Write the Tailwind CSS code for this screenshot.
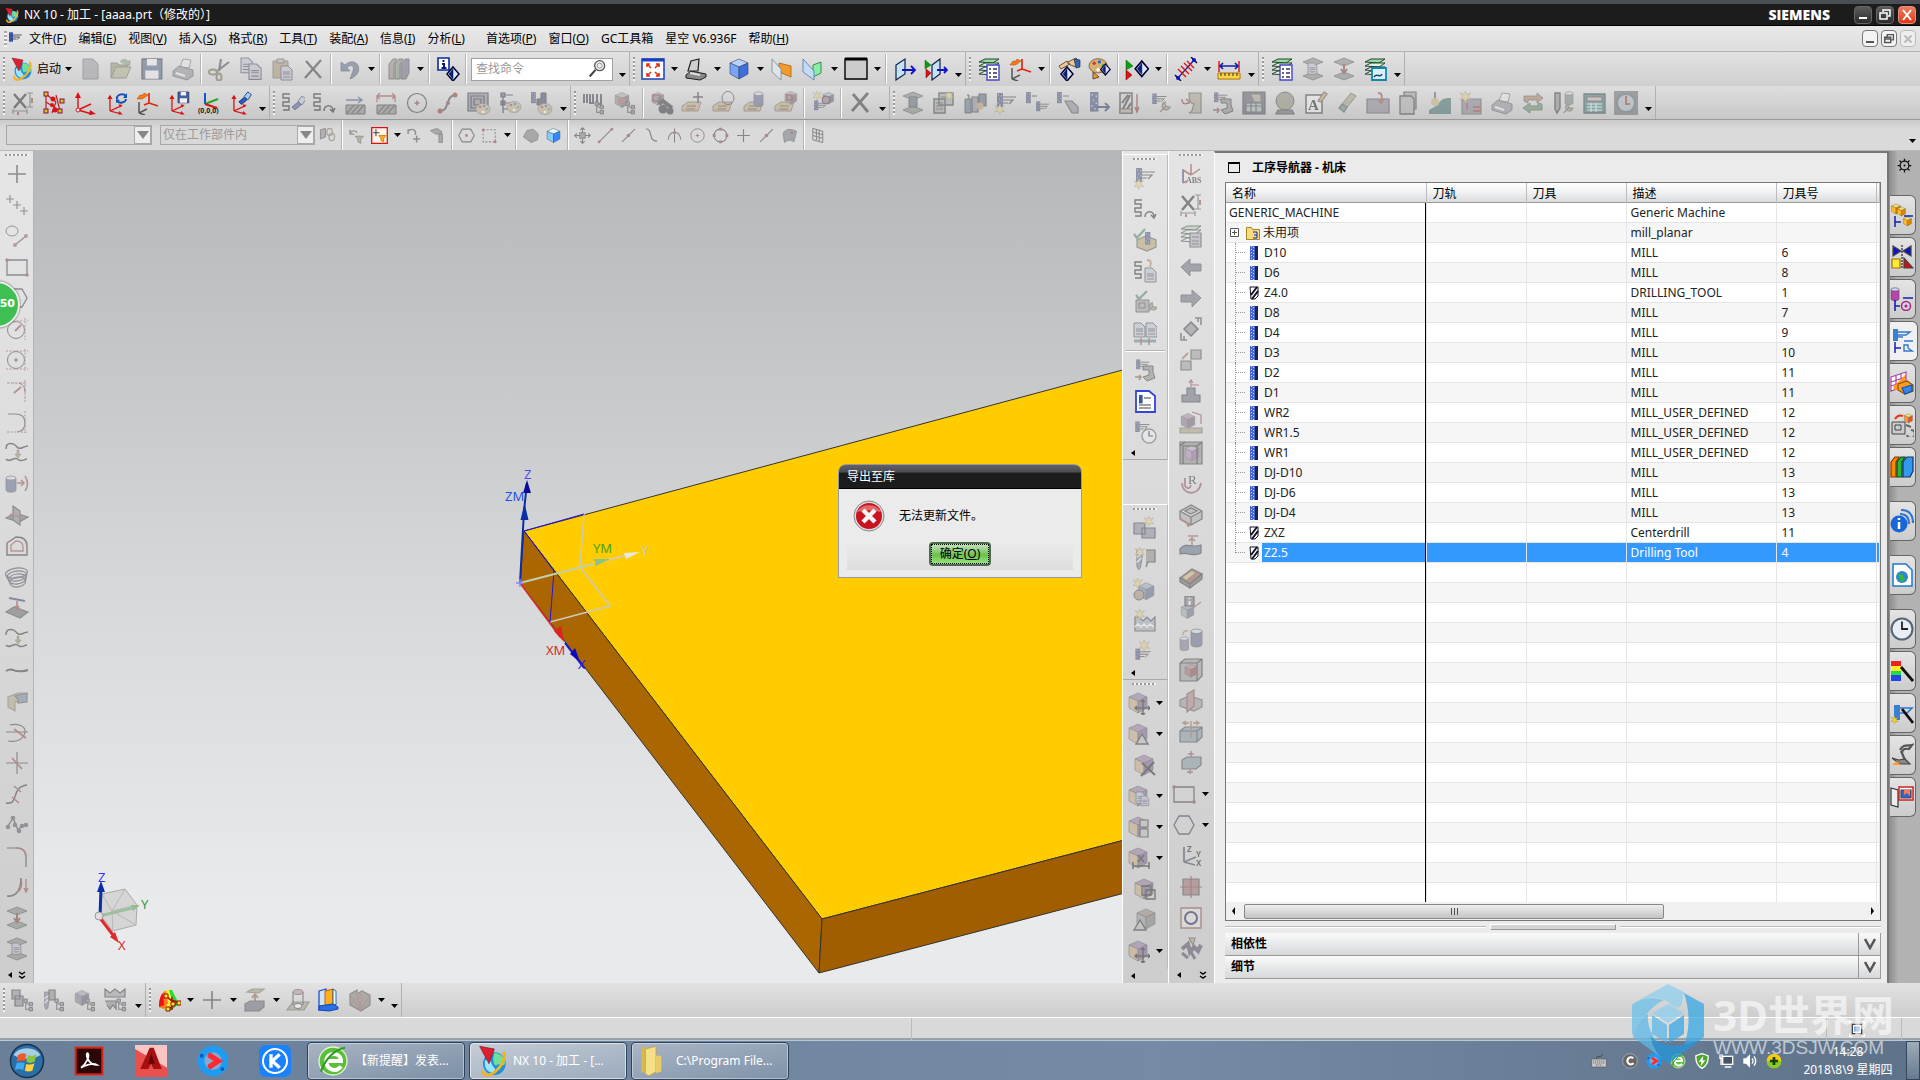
<!DOCTYPE html>
<html lang="zh-CN">
<head>
<meta charset="utf-8">
<meta name="viewport" content="width=device-width, initial-scale=1">
<title>NX 10 - 加工</title>
<script src="https://cdn.jsdelivr.net/npm/@tailwindcss/browser@4"></script>
</head>
<body class="flex h-screen flex-col overflow-hidden bg-[#d8d8d8] font-['Noto_Sans','Noto_Sans_CJK_SC',sans-serif] text-xs text-black">

<!-- Title bar -->
<header class="flex h-[26px] shrink-0 items-center border-t-4 border-b border-t-[#4d4f56] border-b-black bg-[#1c1c1c] px-1 text-white">
  <span data-icon="logo" class="mr-1 size-4"></span>
  <h1>NX 10 - 加工 - [aaaa.prt（修改的）]</h1>
  <span class="mr-6 ml-auto font-['Open_Sans'] text-sm font-extrabold">SIEMENS</span>
  <div class="flex gap-1">
    <button aria-label="最小化" class="flex h-[18px] w-[18px] items-end rounded-sm border border-[#666] bg-linear-to-b from-[#5c5c5c] to-[#2c2c2c] p-1"><span class="h-[2px] w-2 bg-white"></span></button>
    <button aria-label="还原" class="h-[18px] w-[18px] rounded-sm border border-[#666] bg-linear-to-b from-[#5c5c5c] to-[#2c2c2c]"><svg class="size-4" viewBox="0 0 16 16" fill="none" stroke="#fff" stroke-width="1.5"><path d="M6 5V3h7v6h-2M3 6h7v6H3z"/></svg></button>
    <button aria-label="关闭" class="h-[18px] w-[18px] rounded-sm border border-[#e8907c] bg-linear-to-b from-[#ee7a5e] to-[#df3413]"><svg class="size-4" viewBox="0 0 16 16" stroke="#fff" stroke-width="2"><path d="M4 3l8 10M12 3L4 13"/></svg></button>
  </div>
</header>

<!-- Menu bar -->
<nav class="flex h-[26px] shrink-0 items-center border-b border-[#b4b4b4] bg-linear-to-b from-[#e8e8e8] to-[#dedede] pr-1">
  <span class="ml-1 h-4 w-[3px] bg-[repeating-linear-gradient(180deg,#aaa_0_2px,#f4f4f4_2px_4px)]"></span>
  <span data-icon="mill" class="size-4"></span>
  <div id="menu" class="flex"></div>
  <div class="ml-auto flex gap-[3px]">
    <button aria-label="最小化窗口" class="flex h-[17px] w-4 items-end rounded-sm border border-[#777] bg-[#f4f4f4] p-[3px]"><span class="h-[2px] w-2 bg-[#555]"></span></button>
    <button aria-label="还原窗口" class="h-[17px] w-4 rounded-sm border border-[#777] bg-[#f4f4f4]"><svg class="size-[14px]" viewBox="0 0 16 16" fill="none" stroke="#555" stroke-width="1.6"><path d="M6 5V3h7v6h-2M3 6h7v6H3zM3 8h7"/></svg></button>
    <button aria-label="关闭窗口" class="h-[17px] w-4 rounded-sm border border-[#bbb] bg-[#eee]"><svg class="size-[14px]" viewBox="0 0 16 16" stroke="#bbb" stroke-width="2.5"><path d="M4 4l8 8M12 4l-8 8"/></svg></button>
  </div>
</nav>

<!-- Toolbars -->
<div class="flex h-[34px] shrink-0 bg-linear-to-b from-[#e2e2e2] to-[#cfcfcf]">
  <div class="flex items-center border-r border-[#b0b0b0]">
    <div class="flex" data-bar="g"></div>
    <button class="flex w-[67px] items-center pl-[3px]"><span data-icon="logo" class="mr-[3px] size-6"></span>启动<svg class="ml-1 h-1 w-2" viewBox="0 0 8 4"><path d="M0 0h7L3.500 4z"/></svg></button>
    <div class="flex items-center" data-bar="new~ open~ save~ print~ | cut~ copy~ paste~ del~ | undo~ v | books~ v | info |"></div>
    <label class="mx-[2px] flex h-[23px] w-[142px] items-center border border-[#a0a0a0] bg-white px-1">
      <input aria-label="查找命令" placeholder="查找命令" class="w-0 flex-1 outline-none placeholder:text-[#999]">
      <span data-icon="search" class="size-5"></span>
    </label>
    <div class="flex" data-bar="V"></div>
  </div>
  <div class="flex items-center border-r border-[#b0b0b0]" data-bar="g fit v orient v cube v planeo planeg v bg v | door door2 V"></div>
  <div class="flex items-center border-r border-[#b0b0b0]" data-bar="g laylist axorange v | hand palette | diamond v | redlines v ruler V"></div>
  <div class="flex items-center border-r border-[#b0b0b0]" data-bar="g laylist laydoc~ layarrow~ layimg V"></div>
</div>
<div class="flex h-[34px] shrink-0 border-b border-[#999] bg-linear-to-b from-[#dedede] to-[#c8c8c8]">
  <div class="flex items-center border-r border-[#b0b0b0]" data-bar="g dimx~ dots axes axrot axorange axsave ax000 axlight V"></div>
  <div class="flex items-center border-r border-[#b0b0b0]" data-bar="g pathlight~ pathcurve~ hatch~ hatch2~ circdot~ curve~ palsq~ paltree~ palmill~ V"></div>
  <div class="flex items-center border-r border-[#b0b0b0]" data-bar="g tooltree~ blocktree~ | binoc~ tagplus~ tagcirc~ tagcyl~ tagblock~ | starcube~ | bigx~ V"></div>
  <div class="flex items-center border-r border-[#b0b0b0]" data-bar="g layer3~ calcs~ batt~ millstar~ mill2~ millgray~ millarrow~ drillbox~ millwrench~ clampy~ millmach~ gridbox~ ballt~ lettera~ eraser~ boxin~ pages~ teal~ starbox~ print~ cycle~ tools2~ calc~ clock~ V"></div>
</div>
<div class="flex h-[31px] shrink-0 items-center border-b border-[#b8b8b8] bg-linear-to-b from-[#cacaca] to-[#dadada] to-30% pl-[6px]">
  <select aria-label="类型过滤器" disabled class="h-5 w-[146px] appearance-none border border-[#a8a8a8] bg-[#d8d8d8]"><option></option></select>
  <span class="-ml-[18px] flex h-[18px] w-[17px] items-center justify-center border border-[#aaa] bg-[#eee]"><svg class="h-2 w-3" viewBox="0 0 12 8"><path fill="#888" d="M0 0h12L6 8z"/></svg></span>
  <select aria-label="选择范围" disabled class="ml-[9px] h-5 w-[155px] appearance-none border border-[#a8a8a8] bg-[#d8d8d8] pl-[2px] text-[#999] opacity-100"><option>仅在工作部件内</option></select>
  <span class="-ml-[18px] flex h-[18px] w-[17px] items-center justify-center border border-[#aaa] bg-[#eee]"><svg class="h-2 w-3" viewBox="0 0 12 8"><path fill="#888" d="M0 0h12L6 8z"/></svg></span>
  <div class="ml-[2px] flex h-full items-center" data-small="chain~ | filt~ redfilt v rotplus~ hammer~ | hexdot~ dashbox~ v | blob~ cubeb | move4~ lin1~ lin2~ curv1~ arccr~ circdot~ circ4~ plus~ lin2~ surf~ | gridm~"></div>
  <div class="mt-3 mr-[2px] ml-auto flex" data-small="v"></div>
</div>

<!-- Work area -->
<main class="relative flex min-h-0 flex-1">
  <aside class="flex w-[34px] shrink-0 flex-col border-r border-[#b4b4b4] bg-linear-to-b from-[#e6e6e6] to-[#cdcdcd]">
    <div class="flex flex-col items-center" data-col="g plus~ plus3~ circline~ rect~ hexa~ circt~ circt2~ arct~ arct2~ curvdown~ cylar~ planes~ offs~ coil~ planept~ curvdown~ wave~ cshape~ trim~ cross~ scurve~ beads~ corner~ arcar~ layarrow~ laydoc~"></div>
    <div class="mt-auto flex h-4 items-center justify-between px-[7px]" data-end="both"></div>
  </aside>

  <section class="relative min-w-0 flex-1 overflow-hidden bg-linear-to-b from-[#b6b7b8] via-[#d8d9da] via-55% to-[#e9eaec] to-90%">
    <svg class="absolute inset-0 size-full" viewBox="34 151 1088 832" preserveAspectRatio="xMinYMin slice" font-family="Noto Sans" font-size="13">
      <!-- block -->
      <path fill="#fc0" stroke="#333" d="M524 531L1182 354v471L822 919z"/>
      <path fill="#a60" stroke="#333" d="M524 531L822 919l-3 54L520 583z"/>
      <path fill="#a05e00" stroke="#333" d="M822 919l360-94v53L819 973z"/>
      <!-- machine coordinate system -->
      <g fill="none" stroke-width="1.500">
        <path stroke="#ccc9c0" d="M584 514l-4 53 30 39-60 16"/>
        <path stroke="#2a10e0" stroke-width="1" d="M584 514l-60 17 30 40-4 51"/>
        <path stroke="#c3cfae" stroke-width="2" d="M520 583l73-19"/>
        <path stroke="#ccc" d="M605 561l24-7"/>
        <path stroke="#0a2ea8" stroke-width="2" d="M520 583l4-72 3-28"/>
        <path stroke="#e02a2a" d="M520 583l40 54"/>
        <path stroke="#1a10e0" stroke-width="2" d="M565 643l19 25"/>
        <path stroke="#88f" d="M516 583h8m-4-4v8"/>
      </g>
      <path fill="#0a2ea8" d="M524.500 503l4 17h-8z"/><path fill="#0a0aa0" d="M527 480l4 13h-8z"/>
      <path fill="#8ec08a" d="M610 559l-16 0 2 7z"/><path fill="#e8e8e0" d="M640 552l-16 1 2 6z"/>
      <path fill="#d22" d="M564 642l-10-11 7-5z"/><path fill="#0a0ac0" d="M580 662l-10-8 5-6z"/>
      <text x="524" y="479" fill="#4a4af0">Z</text><text x="505" y="501" fill="#1d50e8">ZM</text>
      <text x="593" y="553" fill="#4ea020">YM</text><text x="641" y="555" fill="#c8c8c8">Y</text>
      <text x="546" y="655" fill="#d22c2c">XM</text><text x="578" y="669" fill="#2418e0">X</text>
      <!-- view triad -->
      <path fill="#ccc" fill-opacity=".7" stroke="#aaa" d="M102 894l23-5 12 16-1 20-23 6-12-15z"/>
      <path fill="none" stroke="#b8b8b8" d="M102 894l10 17 25-6M112 911l1 20M125 889l-13 22 24 14"/>
      <path stroke="#9fc09f" stroke-width="3" d="M100 916l32-8"/><path fill="#8fbf8f" d="M140 905l-9 0 2 6z"/>
      <path stroke="#0a2ea8" stroke-width="3" d="M100 916l1-28"/><path fill="#0a2ea8" d="M101 881l4 11h-8z"/>
      <path stroke="#e02a2a" stroke-width="3" d="M100 918l13 17"/><path fill="#e02a2a" d="M119 943l-9-6 5-5z"/>
      <circle cx="99" cy="916" r="4" fill="#e0e0e0" stroke="#999"/>
      <text x="98" y="882" fill="#33f">Z</text><text x="141" y="909" fill="#2f9a3f">Y</text><text x="118" y="950" fill="#d22c2c">X</text>
    </svg>

    <div role="dialog" aria-label="导出至库" class="absolute top-[313px] left-[804px] w-[244px] rounded-t-lg border border-[#999] bg-[#ebebeb]">
      <h2 class="rounded-t-md border-b border-black bg-linear-to-b from-[#606066] from-0% via-[#4d4e53] via-30% to-[#1c1c1c] to-36% px-2 pt-px leading-[22px] text-white">导出至库</h2>
      <div class="flex h-[53px] items-center gap-[14px] px-[14px]">
        <svg class="size-8" viewBox="0 0 32 32"><circle cx="16" cy="16" r="15" fill="#ddd" stroke="#888"/><circle cx="16" cy="16" r="13" fill="#c81420"/><path d="M4 12a13 11 0 0124 0 30 20 0 00-24 0" fill="#e46a6a"/><path d="M10 10l12 12M22 10L10 22" stroke="#f4f4f4" stroke-width="4.500"/></svg>
        <p class="pt-px">无法更新文件。</p>
      </div>
      <div class="mx-2 mb-[7px] flex h-7 items-start justify-center bg-linear-to-b from-[#ebebeb] to-[#dedede]">
        <button class="h-6 w-[62px] rounded-sm border-2 border-[#4c6b4c] bg-linear-to-b from-[#c4e6bc] via-[#6cc04c] via-55% to-[#9ae87c]"><span class="block border border-dotted border-black leading-[18px]">确定(<u>O</u>)</span></button>
      </div>
    </div>
  </section>

  <div class="absolute top-[130px] -left-[27px] flex size-[47px] items-center justify-end rounded-full border-2 border-[#eee] bg-[#3fbf52] pr-[3px] font-['DejaVu_Sans'] text-[11px] font-bold text-white shadow-[0_0_2px_#444]">50</div>

  <aside class="flex w-[46px] shrink-0 flex-col border-l border-white bg-linear-to-b from-[#e4e4e4] to-[#cdcdcd] pt-[3px]">
    <div class="flex flex-col items-center border-t border-r border-b border-t-white border-r-[#bbb] border-b-[#aaa]" data-col="g millstar~ pathcurve~ checkblk~ pathdoc~ checkmach~ docs~ | millmach~ bluedoc millclock~ V"></div>
    <div class="mt-11 flex flex-col items-center border-t border-r border-b border-t-white border-r-[#bbb] border-b-[#aaa]" data-col="g starbox2~ stardrill~ starcube2~ starwave~ starmill~ V"></div>
    <div class="flex flex-1 flex-col items-center border-r border-[#bbb] pr-[2px]" data-col="g cmove~v ctri~v cx~ ccopy~v cgrid~v cdim~v cframe~ ctri2~ cmove~v"></div>
    <div class="flex h-[14px] shrink-0 items-center px-[7px]" data-end="one"></div>
  </aside>
  <aside class="flex w-[46px] shrink-0 flex-col border-l border-white bg-linear-to-b from-[#e4e4e4] to-[#cdcdcd]">
    <div class="flex flex-col items-center pr-[2px]" data-col="g abs~ dimx~ laycalc~ left~ right~ rotd~ boxes~ stand~ cubemeas~ cubewire~ hookr~ wirebox~ planeup~ slab~ infocube~ cyls~ redcube~ cutp~ stretch~ blockpl~ rect~v hexa~v axzyx~ redsq~ osq~ textp~"></div>
    <div class="mt-auto flex h-4 items-center justify-between px-[7px]" data-end="both"></div>
  </aside>

  <!-- Operation navigator -->
  <section class="flex w-[675px] shrink-0 flex-col border-t-2 border-r-2 border-l border-t-[#777] border-r-[#777] border-l-white bg-[#ebebeb] pr-[6px] pl-[10px]">
    <h2 class="flex h-[29px] shrink-0 items-center gap-3 pl-[3px] font-bold"><span class="h-[11px] w-3 border border-t-2 border-black"></span>工序导航器 - 机床</h2>
    <div class="relative flex min-h-0 flex-1 flex-col overflow-hidden border border-[#777] bg-white">
      <table class="w-full table-fixed border-collapse text-left">
        <colgroup><col class="w-[200px]"><col class="w-[100px]"><col class="w-[100px]"><col class="w-[150px]"><col class="w-[100px]"><col></colgroup>
        <thead class="border-b border-[#999] bg-linear-to-b from-white via-[#f0f1f2] to-[#d9dbdd]">
          <tr class="h-[19px] [&>th]:border-r [&>th]:border-[#bbb] [&>th]:px-[6px] [&>th]:pt-[2px] [&>th]:pb-0 [&>th]:font-normal [&>th]:leading-[17px]"><th>名称</th><th>刀轨</th><th>刀具</th><th>描述</th><th>刀具号</th><th aria-label="更多"></th></tr>
        </thead>
        <tbody id="rows"></tbody>
      </table>
      <div class="absolute top-5 bottom-[18px] left-[199px] w-px bg-black"></div>
      <div class="absolute inset-x-0 bottom-0 flex h-[18px] items-center bg-[#f0f0f0] px-1">
        <svg class="size-2" viewBox="0 0 8 8"><path d="M5 0v8L2 4z"/></svg>
        <div class="mx-[6px] flex-1"><div class="flex h-[15px] w-[68%] items-center justify-center gap-[2px] rounded-xs border border-[#888] bg-linear-to-b from-[#eee] to-[#c4c4c4]"><i class="h-[7px] w-px bg-[#555]"></i><i class="h-[7px] w-px bg-[#555]"></i><i class="h-[7px] w-px bg-[#555]"></i></div></div>
        <svg class="size-2" viewBox="0 0 8 8"><path d="M3 0v8l3-4z"/></svg>
      </div>
    </div>
    <div class="flex h-3 shrink-0 items-center gap-1"><i class="h-[2px] flex-1 border-b border-white bg-[#bbb]"></i><i class="h-[6px] w-[126px] border border-t-white border-r-[#999] border-b-[#999] border-l-white bg-[#d4d4d4]"></i><i class="h-[2px] flex-1 border-b border-white bg-[#bbb]"></i></div>
    <button class="flex h-[23px] shrink-0 items-center justify-between border-b border-[#999] bg-linear-to-b from-[#fafafa] to-[#d6d8da] pl-[6px] font-bold">相依性<span class="flex h-full w-[23px] items-center justify-center border-r border-l border-[#999] bg-linear-to-b from-[#fafafa] to-[#d6d8da]"><svg class="size-3" viewBox="0 0 12 12" fill="none" stroke="#555" stroke-width="2.500"><path d="M1 1l5 9 5-9"/></svg></span></button>
    <button class="mb-1 flex h-[23px] shrink-0 items-center justify-between border-b border-[#999] bg-linear-to-b from-[#fafafa] to-[#d6d8da] pl-[6px] font-bold">细节<span class="flex h-full w-[23px] items-center justify-center border-r border-l border-[#999] bg-linear-to-b from-[#fafafa] to-[#d6d8da]"><svg class="size-3" viewBox="0 0 12 12" fill="none" stroke="#555" stroke-width="2.500"><path d="M1 1l5 9 5-9"/></svg></span></button>
  </section>

  <!-- Resource bar -->
  <aside id="tabs" class="flex w-[31px] shrink-0 flex-col items-start gap-[2px] bg-linear-to-r from-[#8c8c8c] to-[#b2b2b2] to-30% pl-px"></aside>
</main>

<div class="flex h-[35px] shrink-0 border-b border-white bg-linear-to-b from-[#e2e2e2] to-[#cdcdcd]">
  <div class="flex items-center border-r border-[#b0b0b0]" data-bar="g tree1~ tree2~ tree3~ tree4~ V"></div>
  <div class="flex items-center border-r border-[#b0b0b0]" data-bar="g rainbow v plus~ v extr~ v punch~ bluepad gem~ v V"></div>
</div>
<div class="flex h-[22px] shrink-0 items-center bg-[#d9d9d9] shadow-[inset_0_-2px_0_#9aa0a8]">
  <div class="h-full w-[912px] border-r border-[#bbb]"></div>
  <div class="mr-[18px] ml-auto flex h-full w-[76px] items-center border-r border-l border-[#bbb] pl-[22px]"><span data-icon="winicon" class="size-4"></span></div>
</div>

<!-- Taskbar -->
<footer class="flex h-10 shrink-0 items-center border-t border-[#b8c8d8] bg-linear-to-r from-[#6a7f98] via-[#758aa4] via-60% to-[#5e7389] text-white">
  <button aria-label="开始" class="flex w-[54px] justify-center"><span data-icon="start" class="size-9"></span></button>
  <button aria-label="PDF" class="flex w-[70px] justify-center"><span data-icon="pdf" class="size-8"></span></button>
  <button aria-label="CAD" class="flex w-[54px] justify-center"><span data-icon="cad" class="size-8"></span></button>
  <button aria-label="视频" class="flex w-[70px] justify-center"><span data-icon="play" class="size-8"></span></button>
  <button aria-label="K" class="flex w-[54px] justify-center"><span data-icon="kapp" class="size-8"></span></button>
  <div class="ml-[5px] flex gap-1">
    <button class="flex h-[38px] w-[158px] items-center gap-[6px] rounded-sm border border-[#31435a] bg-linear-to-br from-white/40 to-white/10 pl-[9px] shadow-[inset_0_0_0_1px_#ffffff66]"><span data-icon="ebrowser" class="size-8"></span>【新提醒】发表...</button>
    <button class="flex h-[38px] w-[158px] items-center gap-1 rounded-sm border border-[#31435a] bg-linear-to-br from-white/60 to-white/30 pl-[7px] shadow-[inset_0_0_0_1px_#ffffff99]"><span data-icon="logo" class="size-8"></span>NX 10 - 加工 - [...</button>
    <button class="flex h-[38px] w-[158px] items-center gap-2 rounded-sm border border-[#31435a] bg-linear-to-br from-white/40 to-white/10 pl-1 shadow-[inset_0_0_0_1px_#ffffff66]"><span data-icon="folder" class="size-8"></span>C:\Program File...</button>
  </div>
  <div class="ml-auto flex items-center gap-2">
    <span data-icon="kbd" class="mr-[7px] size-4"></span><span data-icon="tc" class="size-4"></span><span data-icon="play" class="size-4"></span><span data-icon="ebrowser" class="size-4"></span><span data-icon="shield" class="size-4"></span><span data-icon="net" class="size-4"></span><span data-icon="vol" class="size-4"></span><span data-icon="plusc" class="size-4"></span>
  </div>
  <time class="mr-[10px] ml-[18px] w-24 text-center leading-[18px]">14:28<br>2018\8\9 星期四</time>
  <button aria-label="显示桌面" class="h-full w-[14px] border border-[#33465c] bg-linear-to-b from-white/40 to-white/5"></button>
</footer>

<!-- Site mark -->
<div class="pointer-events-none absolute right-[26px] bottom-4 flex items-start gap-[9px] text-white/60">
  <svg class="h-20 w-[72px]" viewBox="0 0 72 80" opacity=".75">
    <path fill="#8fd0ee" d="M36 0L0 20l2 0Q20 8 36 18Q46 28 50 20L52 8z"/><path fill="#6ac0ea" d="M0 21Q14 10 32 16Q14 24 2 52L0 50z"/><path fill="#38a8e4" d="M52 9l20 11v33Q62 60 50 66Q62 40 52 9z"/><path fill="#5cb8e8" d="M1 53Q8 34 16 30Q14 50 34 66L38 80z"/><path fill="#2496dc" d="M18 52Q36 70 70 55L36 80Q22 70 18 52z"/>
    <path fill="#8fd0ee" d="M36 20l16 9-16 10-16-10z"/><path fill="#5cb8e8" d="M20 31l15 10v18l-15-9z"/><path fill="#38a8e4" d="M52 31L37 41v18l15-9z"/>
  </svg>
  <div class="pt-[6px]"><p class="text-[42px] leading-[50px] font-bold whitespace-nowrap">3D世界网</p><p class="font-['Liberation_Sans'] text-[19px] leading-4">WWW.3DSJW.COM</p></div>
</div>

<script>
// ---- icon parts ----
const at = (x, y, s, k = 1) => `<g transform="translate(${x} ${y}) scale(${k})">${s}</g>`;
const P = (d, f = 'none', s = '#444', w = 1.2) => `<path d="${d}" fill="${f}" stroke="${s}" stroke-width="${w}"/>`;
const cube = (a = '#b8d4ff', b = '#7aa4f8', c = '#3f6ee0') => `<path fill="${a}" stroke="#345" stroke-width=".6" d="M3 6l9-4 9 4-9 4z"/><path fill="${b}" stroke="#345" stroke-width=".6" d="M3 6l9 4v12l-9-5z"/><path fill="${c}" stroke="#345" stroke-width=".6" d="M21 6l-9 4v12l9-5z"/>`;
const gray = () => cube('#aaa', '#888', '#666');
const mixed = () => cube('#b070c0', '#e0a850', '#8858b0');
const tree = P('M2 2v11M2 6h5M2 12h5') + P('M0 0h4v4H0zM6 4h4v4H6zM6 10h4v4H6z', '#889', '#334', 1);
const shaft = `<rect x="0" y="0" width="6" height="14" fill="#34489c"/><path d="M1 2h1M4 3h1M2 6h1M4 8h1M1 10h1M3 12h1" stroke="#aac0ff"/>`;
const mill = at(3, 2, shaft) + P('M9 6h13M9 9h10l-4 4M9 12h5', 'none', '#333', 1.2);
const star = `<path fill="#f0d030" stroke="#865" stroke-width=".5" d="M6 0l1.500 4L12 2 9 6l3 4-4-1-2 4-2-4-4 1 3-4-3-4 4 2z"/>`;
const tag = `<path fill="#d8a850" stroke="#643" stroke-width=".7" d="M1 15l6-4h13l-3 9H1z"/><path d="M6 15h9M5 18h9" stroke="#643"/>`;
const pal = `<ellipse cx="7" cy="6" rx="7" ry="5.500" fill="#d8b070" stroke="#765" stroke-width=".7"/><circle cx="4" cy="4" r="1.300" fill="#d33"/><circle cx="8" cy="3" r="1.300" fill="#36c"/><circle cx="11" cy="6" r="1.300" fill="#3a3"/><circle cx="7" cy="9" r="1.300" fill="#fff"/>`;
const doc = P('M0 0h7l4 4v10H0z', '#b8c0e0', '#446', 1) + P('M2 6h7M2 8h7M2 11h7', 'none', '#446', 1);
const spath = P('M9 3H2v4h6v4H2v4h6v4H2', 'none', '#222', 1.4);
const lay = (c = '#e8efe9') => P('M2 5l6-3h14l-6 4z', c, '#243', 1);
const stack = lay('#9d9') + at(0, 4, lay()) + at(0, 8, lay()) + at(0, 12, lay());
const ax = (c = '#d11') => P('M7 20V4M7 20l13-6M7 20l12 3', 'none', c, 1.5) + `<path fill="${c}" d="M7 1l3 5H4zM22 13l-5-1 2 4zM22 24l-4-4-1 4z"/>`;
const diam = P('M8 1l6 7-6 7-6-7z', '#dce8ff', '#003', 1.5) + P('M8 3v10L4 8z', '#0a2080', '#003', .5);
const wrench = P('M3 12l6-6M8 2a4 4 0 105 5l-3 0-2-2z', '#caa860', '#765', 1.6);
const torch = P('M2 12l6-5 3 3-6 5z', '#2a5ad0', '#124', .8) + P('M8 6l4-5 4 3-4 6z', '#9cf', '#124', .8);
const floppy = P('M0 0h12v12H0z', '#4060a0', '#234', .8) + P('M3 0h6v4H3zM2 7h8v5H2z', '#eef', 'none');
const sheet = (l, h) => P(`M12 ${l}l10 4-10 4-10-4z`, '#7a8a80', '#444', .8);
const cyl = c => `<path fill="${c}" stroke="#446" stroke-width=".7" d="M0 3v12c0 3 10 3 10 0V3z"/><ellipse cx="5" cy="3" rx="5" ry="2" fill="#cde" stroke="#446" stroke-width=".7"/>`;
const clk = `<circle cx="8" cy="8" r="7" fill="#e8eef4" stroke="#567" stroke-width="1.400"/><path d="M8 3v5h4" fill="none" stroke="#222" stroke-width="1.200"/>`;
const prn = P('M9 10l3-8 8 1-2 8z', '#e4e8ec', '#555', .8) + P('M2 14l6-5 14 4v6l-6 4-14-4z', '#8a90a0', '#445', .8) + P('M5 16l9 3', 'none', '#eee', 2);
const machine = P('M2 8h13v12H2zM5 11h6v5H5z', '#999', '#444', 1) + at(11, 9, wrench, .9);
const drill = P('M2 0h6v8l-2 12-2 2-2-4z', '#6a80b0', '#334', .8) + P('M2 8l6-4M2 14l5-5', 'none', '#eef', 1.5);

const I = {
  logo: `<circle cx="13" cy="14" r="8.500" fill="#1d8fe0"/><path fill="#6fe09a" d="M13 6c5 0 8 4 8 8-2 3-4-1-6 1s-4-4-2-9z"/><path fill="#9fe4ff" d="M6 12c2-3 4-1 5 2s4 3 2 7c-5 0-8-4-7-9z"/><ellipse cx="12.500" cy="14" rx="11" ry="5.500" fill="none" stroke="#f2b322" stroke-width="2.200" stroke-dasharray="34 60" stroke-dashoffset="4" transform="rotate(-50 12 14)"/><path fill="#dd2030" stroke="#801020" stroke-width=".5" d="M2 1l11 2-4 11z"/>`,
  new: P('M5 2h10l5 5v15H5z', '#99a', '#667', 1), open: P('M2 21V6h6l2 2h9v3', '#9a9448', '#665', 1) + P('M2 21l5-11h15l-5 11z', '#b8b068', '#665', 1) + P('M11 5c3-4 7-3 8 0l2-2v5h-5', '#6a6', '#575', .7),
  save: at(2, 2, floppy, 1.65), print: prn,
  cut: P('M13 2l-2 12M21 5L8 15', 'none', '#445', 2.2) + `<ellipse cx="5" cy="15" rx="4" ry="2.500" fill="none" stroke="#763" stroke-width="2"/><ellipse cx="11" cy="20" rx="2.500" ry="3.500" fill="none" stroke="#763" stroke-width="2"/>`,
  copy: at(2, 1, doc, 1.05) + at(10, 7, doc, 1.1), paste: P('M3 4h15v17H3z', '#b09050', '#664', 1) + P('M7 2h7v4H7z', '#aaa', '#555', 1) + at(11, 9, doc, 1),
  del: P('M5 4l15 17M20 3L4 21', 'none', '#333', 2.2), bigx: P('M5 3l15 18M20 2L4 20', 'none', '#333', 2.8),
  undo: P('M3 5v9h9l-3-3c3-4 8-3 6 3l-3 8c8-3 11-10 7-15-4-4-9-2-12 1z', '#4a66a8', '#346', .8),
  books: P('M2 7l4-5h4L7 7v15H2z', '#987', '#444', 1) + P('M8 7l4-5h4l-3 5v15H8z', '#696', '#444', 1) + P('M14 7l4-5h4v14l-3 6h-5z', '#669', '#444', 1),
  info: P('M2 1h11v12H2z', '#fff', '#0a2aa0', 1.6) + P('M7.500 3v2M6 7h2v4M5.500 11h5', 'none', '#0a1a80', 2) + at(9, 9, diam),
  search: `<circle cx="14" cy="8" r="6" fill="#eee" stroke="#555" stroke-width="1.500"/><circle cx="14" cy="8" r="3" fill="none" stroke="#888"/>` + P('M9 13l-7 8', 'none', '#444', 2.5),
  fit: P('M1 2h22v20H1z', '#fff', '#1a40c0', 1.5) + P('M1 3h22', 'none', '#1a40c0', 3) + P('M10 11L6 7m0 3V7h3M14 11l4-4m-3 0h3v3M10 15l-4 4m0-3v3h3M14 15l4 4m0-3v3h-3', 'none', '#e03010', 1.6),
  orient: P('M2 18l5-4 15 3v3l-6 3-14-2z', '#888', '#222', 1) + P('M4 14L7 4l8-2-1 12z', '#d0d0d0', '#222', 1.2) + P('M6 16l10 2', 'none', '#ddd', 2),
  cube: cube(), cubeb: cube('#dff', '#8cf', '#38f'),
  planeo: P('M9 6l12 3v11L9 15z', '#f09a30', '#a60', .8) + P('M2 2l9 10v11L2 15z', '#dde4ea', '#789', .8), planeg: P('M12 8l8-3v11l-8 4z', '#8ea', '#484', 1) + P('M2 2l11 12v9L2 15z', '#c0dcf6', '#57a', .8),
  bg: P('M1 2h22v20H1z', '#ccc', '#000', 1.4) + P('M1 2h22', 'none', '#000', 3),
  door: P('M3 8l9-6v15l-9 6z', '#c4e2fa', '#124', 1.2) + P('M9 13h13m-4-4l4 4-4 4', 'none', '#11c', 1.8), door2: P('M8 8l8-6v15l-8 6z', '#c4e2fa', '#124', 1.2) + P('M13 13h10m-3-3l3 3-3 3', 'none', '#11c', 1.8) + P('M1 3l6 5-6 4z', '#191', '#070', .5) + P('M2 12l5 4-5 5z', '#d11', '#700', .5),
  laylist: stack + P('M10 8h12v15H10z', '#fff', '#44c', 1.4) + P('M12 12h2m2 0h4M12 16h2m2 0h4M12 20h2m2 0h4', 'none', '#335', 1.4),
  laydoc: sheet(1) + sheet(15) + at(7, 6, doc, .8), layarrow: sheet(1) + sheet(15) + P('M12 7v8m-3-3l3 4 3-4', 'none', '#a43010', 2), layer3: sheet(1) + sheet(15) + P('M8 6h8v10H8z', '#568', '#244', 1), layimg: stack + P('M9 11h14v12H9z', '#d8f0ff', '#18a', 1.8) + P('M11 20c3-5 6 2 8-3', 'none', '#246', 1.5),
  axes: P('M5 19V4M5 19l14 4M5 19l13-6', 'none', '#d11', 1.4) + `<circle cx="5" cy="19" r="2" fill="#fff" stroke="#d11"/><path fill="#d11" d="M5 1l3 6H2zM23 23l-6-4-1 5z"/>`,
  axrot: at(0, 3, ax(), .85) + P('M13 8a5 4 0 019-3m0 3a5 4 0 01-9 2', 'none', '#1450b0', 2) + P('M23 2v5h-4zM12 12V8l4 1z', '#1450b0', 'none'), axorange: P('M14 2v10M14 12l9 3M14 12l-5 2', 'none', '#e02a10', 1.7) + P('M2 8l3-4h3l1-2 4 2-4 3-2 1z', '#f27a18', '#b40', .5) + P('M4 22V11M4 22l8-4M4 22l6 2', 'none', '#555', 1.5),
  axsave: at(0, 3, ax(), .85) + at(12, 1, floppy, .9), ax000: P('M8 13V2', 'none', '#15c', 2) + P('M8 13l13-5', 'none', '#2a2', 2) + P('M8 13l12 4', 'none', '#d11', 2) + '<text x="1" y="22" font-size="7" font-weight="bold">(0,0,0)</text>', axlight: at(0, 3, ax(), .85) + at(9, 0, torch, .9),
  hand: P('M2 9l8-5 3 3-9 5zM11 5l8-4 4 4-4 5-8-3z', '#f0c890', '#654', 1) + P('M17 2l6 1v7l-4 1z', '#36a', '#124', .6) + at(2, 9, diam), palette: at(1, 1, pal, 1.3) + at(11, 6, diam, .8) + P('M5 15v7l6-2z', '#d8a030', '#743', 1), diamond: P('M1 3l7 6-7 4z', '#191', '#060', .5) + P('M1 13l6 5-6 5z', '#d11', '#700', .5) + at(8, 3, diam, 1.1),
  redlines: P('M3 22L21 2', 'none', '#02a', 1.2) + P('M4 12l8 8M7 9l8 8M10 6l8 8M13 4l7 7', 'none', '#d11', 1.3) + P('M1 18l6 6M17 0l6 6', 'none', '#111', 1.5) + '<circle cx="4" cy="21" r="2" fill="#11c"/><circle cx="20" cy="3" r="2" fill="#11c"/>', ruler: P('M2 4v11M22 4v11', 'none', '#d11', 1.4) + P('M3 9h18M6 6L3 9l3 3M18 6l3 3-3 3', 'none', '#12a', 1.7) + P('M1 16h22v6H1z', '#ffd640', '#a70', 1) + P('M4 16v3M8 16v3M12 16v3M16 16v3M20 16v3'),
  dimx: P('M3 3l12 14M15 3L3 17', 'none', '#222', 2.4) + P('M19 2v14M16 2h6M16 16h6M2 20h14M2 18v5M16 18v5', 'none', '#555') + P('M21 7v5M7 21v3', 'none', '#c33', 2), dots: P('M4 3v17M4 3l10 8M4 11l14 9M14 4l4 16M14 11l-4 11', 'none', '#b22', 1.2) + [[4, 3], [4, 20], [20, 10], [18, 20]].map(a => `<rect x="${a[0] - 2}" y="${a[1] - 2}" width="4" height="4" fill="#d8c020" stroke="#814"/>`).join('') + '<circle cx="11" cy="8" r="2.500" fill="#d11"/><circle cx="10" cy="14" r="2" fill="#d11"/><circle cx="13" cy="19" r="2.500" fill="#d11"/>',
  pathlight: spath + at(9, 4, torch), pathcurve: spath + P('M12 20c0-7 9-7 9 0m-3-2l3 3 2-4', 'none', '#222', 1.5), hatch: P('M3 14h19v9H3z', '#888', '#333', 1) + P('M4 22l7-8M9 22l7-8M14 22l7-8') + P('M3 9h16m-4-3l4 3-4 3', 'none', '#25a', 1.5), hatch2: P('M3 14h19v9H3z', '#888', '#333', 1) + P('M4 22l7-8M9 22l7-8M14 22l7-8') + P('M3 11V5h18v6M6 2L3 5l3 3M18 2l3 3-3 3', 'none', '#c33', 1.3),
  circdot: '<circle cx="12" cy="12" r="9.500" fill="none" stroke="#333" stroke-width="1.200"/><path d="M9.500 12h5M12 9.500v5" stroke="#c22" stroke-width="1.500"/>', curve: P('M4 20c10 0 5-15 15-16', 'none', '#444', 2) + '<circle cx="4" cy="20" r="2.500" fill="#c22"/><circle cx="12" cy="12" r="2" fill="#c22"/><circle cx="19" cy="4" r="2.500" fill="#c22"/>',
  palsq: P('M1 2h20v18H1z', '#889', '#225', 1.2) + P('M4 5h13v12H4zM7 8h7v6H7z', 'none', '#225') + at(9, 12, pal), paltree: P('M3 2h4v4H3zM3 10h4v4H3zM5 6v16M8 4h7M8 12h5M5 18h5', '#668', '#225') + at(9, 10, pal), palmill: at(2, 1, shaft, .8) + P('M8 8h4V2h5v12H8z', '#447', '#225', 1) + at(9, 12, pal),
  tooltree: P('M2 3v9M5 3v9M8 3v9h3V3M15 3v10h4V3', 'none', '#435', 2) + at(13, 11, tree, .85), blocktree: at(0, 0, gray(), .75) + '<circle cx="9" cy="10" r="4" fill="#c55"/>' + at(13, 11, tree, .85),
  binoc: at(0, 0, gray(), .65) + P('M3 4h7v6H3z', 'none', '#c22', 1.5) + '<circle cx="13" cy="18" r="4.500" fill="#334"/><circle cx="20" cy="20" r="3.500" fill="#334"/><path d="M9 13l4-3 9 7" stroke="#334" stroke-width="4"/>', tagplus: tag + P('M17 1v11M12 6h10', 'none', '#333', 1.5), tagcirc: tag + '<ellipse cx="16" cy="7" rx="6" ry="6.500" fill="none" stroke="#336"/>', tagcyl: tag + at(11, 0, cyl('#56a'), .9), tagblock: tag + at(9, -1, gray(), .65) + P('M13 4h5v5h-5z', 'none', '#c22', 1.5),
  starcube: at(1, 8, mill, .7) + at(10, 0, cube('#aac', '#77b', '#558'), .6) + '<circle cx="15" cy="9" r="4" fill="#a67" stroke="#422"/>' + at(2, 0, star, .7),
  calcs: P('M7 2h14v12H7zM2 8h11v14H2z', '#99a699', '#344', 1.5) + P('M4 12h7M4 15h7M4 18h7M9 6h9') + at(13, 0, star, .7), batt: P('M2 8h6v14H2zM4 4h2v4', '#4a7a90', '#244', 1) + P('M9 6h6v15H9z', '#88a', '#334') + P('M16 3h7v12h-7z', '#568', '#234') + '<circle cx="17" cy="15" r="3.500" fill="#e09030"/>',
  mill, millstar: mill + at(1, 13, star, .8), starmill: at(0, 7, mill, .8) + at(6, 0, star, .85), mill2: at(1, 1, shaft, .8) + P('M7 5h5') + at(9, 9, mill, .7), millgray: at(1, 1, shaft, .8) + P('M7 5h6M9 10h7l6 6v6h-6z', '#8a8aa0', '#445'), millarrow: at(3, 1, shaft, 1.4) + P('M10 16h12m-4-4l4 4-4 4', 'none', '#238', 2), drillbox: P('M2 2h12v20H2z', '#ccc', '#333', 1.5) + P('M4 20L12 4M4 12l6-8M8 20l5-8', 'none', '#333', 2) + P('M19 3v17m-2-4l2 5 2-5', 'none', '#c22', 1.4) + P('M2 18h12v4H2z', '#d99'), millwrench: at(1, 1, mill, .75) + at(8, 9, wrench), clampy: P('M9 2h12v20H9c5-2 3-6 5-9-4 0-5-4-5-11z', '#a8a078', '#554') + P('M2 8c0 7 6 5 7 2m-3-2l3 2v3', 'none', '#c33', 1.6),
  millmach: at(1, 0, mill, .7) + P('M10 8h10v6l2 6-8 3-4-4 6-2v-5h-6z', '#888', '#333', 1) + P('M2 19h6m-2-2l2 2-2 3', 'none', '#c33', 1.6), gridbox: P('M1 1h22v22H1z', '#557', '#334') + P('M4 12h16v9H4zM4 15h16M9 12v9M14 12v9', '#a8b0b0', '#245') + P('M9 3h10v8h-6', '#a8a078', '#554'), ballt: '<circle cx="12" cy="10" r="9" fill="#8a8a60" stroke="#443"/>' + P('M5 19h14l2 4H3z', '#667', '#334'), lettera: P('M2 4h16v18H2z', '#eee', '#333', 1.5) + '<text x="4" y="19" font-size="15" font-weight="bold" font-family="Liberation Serif">A</text>' + P('M14 10l6-9 3 2-6 8z', '#d8a030', '#643'), eraser: P('M4 17L16 2l5 3L9 20z', '#a8a058', '#554', 1) + P('M4 17l3-4 5 3-3 5z', '#5a8a7a', '#354'), boxin: P('M1 8h22v14H1z', '#888098', '#445') + P('M12 2c5 0 4 4 3 9m-3-3l3 4 3-4', 'none', '#b43', 2), pages: P('M7 1h12v17H7z', '#999', '#333', 1.2) + P('M3 5h11l3 3v15H3z', '#aaa', '#333', 1.3), teal: P('M1 23v-4l9-5c3-6 5-7 13-7v16z', '#1f7070', 'none') + P('M7 1v8', 'none', '#26a', 2) + '<circle cx="7" cy="11" r="4" fill="#d8b030"/>', starbox: P('M3 8h19v15H3z', '#888098', '#556') + at(1, 0, star, .9) + P('M8 12v6M14 16h8M14 20h8', 'none', '#c33', 1.8), cycle: P('M3 10V5h13V2l6 5-6 5V9H7v3z', '#c07a30', '#643', .8) + P('M21 13v6H9v3l-7-5 7-5v3h8v-3z', '#3a9a50', '#253', .8), tools2: P('M3 2h5v15l-3 5-2-4z', '#888', '#333', 1.4) + at(13, 0, cyl('#687'), .8) + at(9, 11, wrench, .9), calc: P('M1 3h21v19H1z', '#1a8080', '#144', 1.3) + P('M4 6h15v4H4z', '#eaa') + P('M4 13h15M4 16h15M4 19h15M8 12v9M13 12v9', 'none', '#cff', 1), clock: P('M0 0h24v24H0z', '#666', 'none') + '<circle cx="12" cy="12" r="9" fill="#a4b4c0" stroke="#368" stroke-width="2"/>' + P('M12 5v8h4', 'none', '#d22', 2),
  chain: P('M2 4l7-2v12l-7 3z', '#889', '#334') + '<ellipse cx="15" cy="7" rx="4" ry="5" fill="none" stroke="#875" stroke-width="2"/><ellipse cx="18" cy="14" rx="4" ry="5" fill="none" stroke="#875" stroke-width="2"/>', filt: P('M10 13h12l-4 4v6l-4-2v-4z', '#a89040') + P('M3 4v6h6M3 9c3-5 8-4 10-1', 'none', '#357', 2), redfilt: P('M1 1h22v22H1z', '#fdf4ea', '#d11', 1.8) + P('M7 3v10M3 8h9', 'none', '#444', 1.5) + P('M11 12h10l-3 4v5l-4-2v-3z', '#fa2', '#b70', 1), rotplus: P('M3 10V4h5M4 5c6-4 11 0 9 6M15 12v10M10 17h10', 'none', '#345', 2), hammer: P('M2 5l9-3 7 4v4H9zM14 10h5v12h-5z', '#777', '#444'), hexdot: P('M6 3h12l5 9-5 9H6l-5-9z', 'none', '#333', 1.5) + '<circle cx="12" cy="12" r="2" fill="#c22"/>', dashbox: '<path d="M3 4h17v17H3z" fill="none" stroke="#444" stroke-width="1.500" stroke-dasharray="3 2"/><circle cx="3" cy="4" r="2" fill="#c22"/><circle cx="20" cy="21" r="2" fill="#c22"/>', blob: P('M2 14l5-9 9-2 7 7-1 8-9 4z', '#777', '#444'), move4: P('M12 1v22M1 12h22M9 4l3-3 3 3M9 20l3 3 3-3M4 9l-3 3 3 3M20 9l3 3-3 3', 'none', '#333', 1.6) + P('M8 8h8v8H8z', '#686', '#333'), lin1: P('M3 21L21 3', 'none', '#333', 1.5) + '<circle cx="3" cy="21" r="2" fill="#c22"/><circle cx="21" cy="3" r="2" fill="#c22"/>', lin2: P('M3 21L21 3', 'none', '#333', 1.5) + '<circle cx="12" cy="12" r="2.500" fill="#c22"/>', curv1: P('M4 3c10-2 3 18 16 17', 'none', '#333', 1.6), arccr: P('M12 2v20M3 18c2-14 16-14 18 0', 'none', '#333', 1.5) + '<circle cx="12" cy="8" r="2" fill="#c22"/>', circ4: '<circle cx="12" cy="12" r="9" fill="none" stroke="#333" stroke-width="1.500"/><path d="M10 3h4M10 21h4M3 10v4M21 10v4" stroke="#c22" stroke-width="4"/>', plus: P('M12 3v18M3 12h18', 'none', '#333', 1.6), surf: P('M3 9c4-8 12-6 19-3l-4 15c-6-4-10-2-13 1z', '#678', '#345') + '<circle cx="15" cy="8" r="2" fill="#c22"/>', gridm: P('M4 2l14 4v16L4 18zM4 7l14 4M4 12l14 4M9 3v16M13 4v16', 'none', '#333', 1.4),
  plus3: P('M5 2v8M1 6h8M12 8v8M8 12h8M19 14v8M15 18h8'), circline: '<ellipse cx="7" cy="7" rx="6" ry="5" fill="none" stroke="#444"/><circle cx="7" cy="7" r=".8"/>' + P('M10 21l11-9') + '<circle cx="10" cy="21" r="2" fill="#c44"/><circle cx="21" cy="12" r="2" fill="#c44"/>', rect: P('M2 5h20v15H2z', 'none', '#335', 1.3) + '<circle cx="2" cy="5" r="1.800" fill="#a33"/><circle cx="22" cy="20" r="1.800" fill="#a33"/>', hexa: P('M7 3h10l5 9-5 9H7l-5-9z', 'none', '#336', 1.3),
  circt: '<circle cx="11" cy="13" r="8.500" fill="none" stroke="#336"/><path d="M1 4h22M20 1v22" stroke="#c44" stroke-dasharray="2 1.500"/><path d="M10 14l6-6" stroke="#c33" stroke-width="2"/>', circt2: '<circle cx="11" cy="12" r="8.500" fill="none" stroke="#336"/><path d="M1 3h22M1 21h22M20 1v22" stroke="#c44" stroke-dasharray="2 1.500"/><path d="M9 12h4M11 10v4" stroke="#333"/>', arct: '<path d="M2 4h20M20 1v22" stroke="#c44" stroke-dasharray="3 1"/><path d="M14 4q6 2 6 9" fill="none" stroke="#336"/><path d="M9 14l7-6" stroke="#c33" stroke-width="2"/>', arct2: P('M3 4h7q10 0 10 9 0 8-8 9') + '<path d="M2 22h21M20 1v22" stroke="#c44" stroke-dasharray="2 1.500"/>', curvdown: P('M1 8c0-8 8-6 11-2s6-1 11-1M1 18c4 5 8-4 13 1 4 2 5-1 8-1', 'none', '#333', 1.5) + P('M12 9v4h-2l3 4 3-4h-2V9z', '#a84', '#753', .5), cylar: at(1, 3, cyl('#56a')) + P('M12 11h7m-3-3l3 3-3 3M20 4q5 8 0 15', 'none', '#b44', 1.6), planes: P('M1 15l9-5 13 4-9 5z', '#677', '#444') + P('M8 3l7 5v14l-7-5z', '#788', '#444') + P('M5 11l13 4', 'none', '#c44', 1.6), offs: P('M2 21V9l9-6c7 0 11 3 11 9v9z', 'none', '#333', 1.4) + P('M6 17v-6l5-4c4 0 7 2 7 6v4z', 'none', '#c44', 1.4), coil: [8, 11, 14, 17].map((y, i) => `<ellipse cx="12" cy="${y}" rx="${11 - i}" ry="5" fill="none" stroke="#446" stroke-width="1.200" transform="rotate(-8 12 12)"/>`).join(''), planept: P('M1 16l8-5 14 5-8 6z', '#667', '#444') + P('M4 2l16 3', 'none', '#33a', 1.8) + P('M12 5v8m-2-3l2 3 2-3', 'none', '#c33', 1.6), wave: P('M1 13c6-4 7 0 11 0s6 1 11-1', 'none', '#333', 2), cshape: P('M3 8l10-4h6v7l-9 2v9l-7-4z', '#b8a850', '#776') + P('M10 7l12-3v9l-9 1V10z', '#68b', '#456'), trim: P('M1 12h22M3 21c10 2 16-3 17-9S12 3 5 5') + P('M9 9l12 9', 'none', '#c33', 1.6), cross: P('M12 1v22M1 12h22') + P('M7 7l10 11', 'none', '#c33', 1.6), scurve: P('M1 21c14 2 4-16 21-18', 'none', '#333', 1.5) + P('M9 4l7 6M7 15l7 6', 'none', '#c33', 1.6), beads: P('M3 13l5-8 5 12 4-4 5-1', 'none', '#445', 1.4) + [[3, 14], [8, 5], [10, 12], [14, 18], [17, 13], [21, 12]].map(a => `<circle cx="${a[0]}" cy="${a[1]}" r="2.300" fill="#556"/>`).join(''), corner: P('M2 4h10q9 0 9 9v10', 'none', '#333') + P('M11 4q10 0 10 9', 'none', '#c33', 1.6), arcar: P('M2 21c10 1 14-7 14-18', 'none', '#444', 1.6) + P('M21 4v12m-2-3l2 4 2-4M16 5q2 6-2 11', 'none', '#c33', 1.3),
  checkblk: P('M4 12l9-4 10 4v7l-9 4-10-4z', '#c8a040', '#554') + at(12, 4, shaft, .9) + P('M1 6l3 4 8-9', 'none', '#285', 2.2), pathdoc: spath + at(12, 9, doc, 1) + P('M14 1c5 0 4 4 3 7', 'none', '#c73', 1.8), checkmach: at(1, 2, machine) + P('M3 5l3 4 8-8', 'none', '#285', 2.2), docs: at(1, 2, doc) + at(13, 2, doc) + P('M1 20h22', 'none', '#389', 3) + P('M8 17v7M16 17v7', 'none', '#c33', 1.5), bluedoc: P('M3 2h13l6 5v16H3z', '#fff', '#34d', 1.8) + at(6, 6, shaft, .6) + P('M11 9h7M6 16h12M6 19h12'), millclock: at(0, 0, mill, .75) + at(8, 8, clk),
  starbox2: P('M1 7h11v11H1zM9 12h13v10H9z', '#88a', '#335') + at(11, 0, star, .8), stardrill: at(2, 3, drill, .9) + P('M13 3h9v12h-7l-2 5', '#888', '#333') + at(2, 0, star, .8), starcube2: at(3, 3, cube('#8ac', '#68b', '#46a'), .85) + '<circle cx="6" cy="17" r="5" fill="#b86" stroke="#433"/>' + at(0, 0, star, .8), starwave: P('M2 8v14h20V8l-4 4-4-4-4 4-4-4z', '#9ab', '#345') + P('M2 18l3-3 3 3 3-3 3 3 3-3 4 3', 'none', '#eee', 1.6) + at(2, 0, star, .8),
  cmove: mixed() + at(9, 9, P('M8 0v15M0 8h15M6 2l2-2 2 2M6 13l2 2 2-2M2 6L0 8l2 2M13 6l2 2-2 2', 'none', '#222', 1.5)), ctri: mixed() + P('M16 12l6 10H10z', '#bbb', '#333', 1.4), ctri2: at(2, -1, cube('#a86', '#99a', '#877')) + P('M8 12l6 10H2z', '#bbb', '#333', 1.4), cx: mixed() + P('M10 10l13 12M22 9L9 23', 'none', '#222', 2), ccopy: mixed() + at(10, 8, doc, .8) + at(15, 12, doc, .7), cgrid: mixed() + P('M14 5h8v7h-8zM14 14h8v8h-8z', '#bbb', '#333'), cdim: mixed() + P('M7 20h16M7 16v7M23 16v7M12 9l6 7M18 9l-6 7', 'none', '#222', 1.5), cframe: mixed() + P('M10 9h9v9h-9zM14 13h9v9h-9z', 'none', '#222', 1.3),
  abs: P('M4 21V7M4 21l4-2M12 13V2M12 13l9-6M12 13L4 8', 'none', '#c22', 1.5) + P('M4 21V8', 'none', '#24a', 1.6) + '<text x="7" y="21" font-size="8" font-weight="bold" font-family="Liberation Serif">ABS</text>', laycalc: stack + P('M11 9h11v14H11z', '#aab', '#445') + P('M13 13h7M13 17h7M13 20h7'), left: P('M2 12l9-8v5h11v7H11v5z', '#668', '#446', 1), right: P('M22 12l-9-8v5H2v7h11v5z', '#668', '#446', 1), rotd: P('M12 5l7 7-7 7-7-7z', '#889', '#334', 1.5) + P('M16 1h6v7M19 1v4M2 16v7h6M5 19v4', 'none', '#446', 1.6), boxes: P('M12 2h10v9H12zM2 13h10v9H2z', '#999', '#444') + P('M3 11l6-6', 'none', '#b63', 2), stand: P('M8 9h8v7h5v7H3v-7h5z', '#668', '#335') + P('M12 8V1m-2 3l2-3 2 3M12 6h8', 'none', '#c33'), cubemeas: at(0, 2, cube('#b8a', '#969', '#757'), .75) + P('M1 18h22v5H1z', '#b09860', '#765') + P('M13 2l9 3v9', 'none', '#c33'), cubewire: P('M1 1h22v22H1z', '#888', '#333') + at(4, 3, cube('#c9d', '#b7c', '#a5b'), .75) + P('M1 5l5-4M18 5h-14v18M18 5v18M18 5l5-4', 'none', '#222'), hookr: '<text x="9" y="12" font-size="13" font-family="Liberation Serif">R</text>' + P('M3 11c0 12 17 14 19 0M6 6v8q4 5 6-1', 'none', '#a45', 1.8), wirebox: P('M1 8l11-6 11 6v8l-11 6L1 16zM1 8l11 6 11-6M12 14v8M6 8l6-3 6 3-6 3z', '#aaa', '#333', 1.2) + P('M1 16l7 4 2 4', 'none', '#c33', 2), planeup: P('M1 15c7-8 11 0 21-4v8c-8 5-13-2-21 1z', '#479', '#335') + P('M9 2h10M13 12V4m-3 3l3-3 3 3', 'none', '#b53', 1.6), slab: P('M1 13L13 4l10 5-12 10z', '#b85030', '#432') + P('M4 12l9-6 3 2-9 7z', '#c8b838', 'none') + P('M1 13l10 6v4L1 17zM23 9L11 19v4l12-9z', '#665', '#333'), infocube: at(0, 7, cube('#99b', '#8ab', '#669'), .7) + P('M6 0h9v10H6z', '#778', '#334') + P('M10.500 2v1M10.500 5v4', 'none', '#fff', 2) + P('M14 12l8-6', 'none', '#c44'), cyls: at(12, 1, cyl('#56a'), 1.1) + at(1, 9, cyl('#77a'), .85) + P('M4 8c0-4 3-5 5-4', 'none', '#d73', 1.7), redcube: P('M1 5l5-4h17v17l-5 5H1zM1 5h17v18M18 5l5-4', '#999', '#333') + at(4, 5, cube('#d77', '#c55', '#b33'), .65), cutp: P('M1 11l9-4 13 4v7l-8 4-14-5z', '#999', '#555') + P('M8 5l7-4v16l-7 6z', '#c77', '#844'), stretch: P('M1 11l5-4h17v10l-5 5H1zM1 11h17v11M18 11l5-4', '#79a', '#345') + P('M5 3h5m4 0h5M7 1L4 3l3 2M17 1l3 2-3 2M12 1v17', 'none', '#c53', 1.4), blockpl: P('M3 9l5-3h14v8l-5 4H3z', '#79a', '#345') + P('M12 0v6M9 3h6M11 18v5M8 21h6', 'none', '#b44', 1.5), axzyx: P('M5 18V3M5 18l12-5M5 18l11 3', 'none', '#346', 1.8) + '<text x="8" y="8" font-size="8" font-weight="bold">Z</text><text x="17" y="13" font-size="8" font-weight="bold">Y</text><text x="17" y="22" font-size="8" font-weight="bold">X</text>', redsq: P('M4 4h16v16H4z', '#b66', '#444') + P('M12 1v22M1 12h22', 'none', '#c22'), osq: P('M2 2h20v20H2z', '#e8e4e0', '#a43', 1.4) + '<circle cx="12" cy="12" r="6" fill="none" stroke="#219" stroke-width="2"/>', textp: P('M3 12l6-5 2 8 4-5 4 4 3-6', 'none', '#547', 4) + P('M3 16l6 5M12 15l4 7', 'none', '#547', 3) + P('M10 1h6l-2 7z', '#d8a840', '#554'),
  tree1: P('M1 2h8v9H1zM4 8h8v10H4z', '#889', '#334') + at(13, 11, tree, .85), tree2: at(1, 4, drill, .8) + P('M7 2h6v10H7z', '#888', '#333') + at(13, 11, tree, .85), tree3: at(0, 1, cube('#99b', '#77a', '#558'), .75) + at(13, 11, tree, .85), tree4: P('M1 1v8h20V1l-5 4-5-4-5 4z', '#99a', '#334') + P('M1 13h11v8l-3-4-3 4-3-4', '#889', '#334') + at(13, 11, tree, .85),
  rainbow: P('M2 19C2 9 8 1 15 2l7 14-9 7z', '#2d3', 'none') + P('M2 19C2 9 8 1 12 2l4 14-5 6z', '#fe2', 'none') + P('M2 19C2 9 6 3 9 3l2 12-4 6z', '#f72', 'none') + P('M2 19C2 11 4 7 6 5l1 12z', '#e11', 'none') + P('M9 8l9 8-6 5M12 11l11 4M15 9v13', 'none', '#a11', 1.5) + '<path d="M7 6h4v4H7zM14 14h4v4h-4zM20 13h4v4h-4zM9 19h4v4H9z" fill="#fd3" stroke="#811"/>', extr: P('M4 4l5-3h12l-5 4z', '#aa9070', '#765') + P('M12 15V7m-3 3l3-4 3 4', 'none', '#a52', 1.8) + P('M2 16l5-3h14v6l-5 4H2z', '#668', '#445'), punch: P('M1 22l6-8h16l-5 8z', '#aaa060', '#665') + '<ellipse cx="12" cy="18" rx="4" ry="2.500" fill="#fff" stroke="#336"/><ellipse cx="12" cy="4" rx="5" ry="2.500" fill="#c88" stroke="#844"/>' + P('M7 4v13M17 4v13', 'none', '#446'), bluepad: P('M2 3l7-2v18l-7 3z', '#cfe4fa', '#14c', 1.2) + P('M8 3l8-2v15l-8 2z', '#ffb020', '#b60', 1) + P('M2 22v-4l14-2 5 3v2l-9 2z', '#2a6ee8', '#14a', 1) + P('M16 1l3 2v14l-3-1z', '#dff', '#14a', .8), gem: P('M2 6l7-4v4l5-3 8 4v10l-9 6-11-6z', '#887a68', '#543') + P('M2 6l10 17L22 7M2 17L13 6v17M9 2l3 20', 'none', '#a55', 1),
  winicon: P('M1 5V1h4M19 1h4v4M1 19v4h4M19 23h4v-4', 'none', '#fff', 2) + P('M5 5h14v14H5z', '#fff', '#444', 2) + P('M8 8h8v8H8z', '#48d', 'none'),
  start: '<circle cx="12" cy="12" r="11" fill="#2c6fa6" stroke="#16324e"/><path d="M3 8a10 8 0 0118 0Q12 13 3 8" fill="#a8cfe6"/><path fill="#f05a28" d="M6 8q3-2 5.500-.5l-1 4.500Q8 11 5 12.500z"/><path fill="#8cc63f" d="M12.500 8q3 1.500 6-.5l-1.500 5q-2.500 1.500-5.500 0z"/><path fill="#3fa9f5" d="M5 13.500q3-1.500 5.500 0l-1 4.500q-2.500-1.500-5.500 0z"/><path fill="#ffd23a" d="M11.500 14q3 1 5.500-.5l-1.500 5q-2.500 1-5 0z"/>',
  pdf: '<rect x="2" y="2" width="20" height="20" fill="#2a0808" stroke="#e02010" stroke-width="1.500"/><path d="M6 17c4-3 7-9 5-11-2 0 0 9 7 9-3-2-8 0-12 2z" fill="none" stroke="#fff" stroke-width="1.300"/>', cad: '<path fill="#f8c4c4" d="M0 0h24v24H0z"/><path fill="#e85050" d="M0 24V3l24 14v7z"/><path fill="#a81010" d="M11 2h3l6 16h-6l-2-4-2 4H4z"/><path fill="#600" d="M12 6l3 8h-5z"/>', play: '<circle cx="12" cy="12" r="9" fill="#86aad0" stroke="#1e9cf2" stroke-width="5"/><path fill="none" stroke="#ff2a34" stroke-width="4" stroke-linecap="round" d="M10 8l6 4-6 4"/><circle cx="3.500" cy="8" r="1.500" fill="#0a5cc0"/><circle cx="19" cy="18" r="1.500" fill="#0a5cc0"/>', kapp: '<rect width="24" height="24" rx="5" fill="#1a82ff"/><circle cx="12" cy="12" r="9" fill="none" stroke="#fff" stroke-width="1.500"/><path d="M9 7v10M15.500 7L10 12l5.500 5" fill="none" stroke="#fff" stroke-width="2.500"/>',
  ebrowser: '<circle cx="12" cy="12" r="10.500" fill="#5cbf3a" stroke="#e0f8d0"/><path d="M18 16c-3 5-11 3-11-4s11-7 11 0H8" fill="none" stroke="#fff" stroke-width="3"/><path d="M3 20C6 10 14 3 21 2" fill="none" stroke="#2f9a22" stroke-width="1.500"/>', folder: '<path fill="#d8b850" d="M4 1l6 2v19l-6-2z"/><path fill="#f5e08a" stroke="#c8a040" stroke-width=".6" d="M7 3l8-2v19l-5 3-3-1z"/><path fill="#e8cc6a" d="M15 8h4v12l-4 1z"/>',
  kbd: '<rect x="1" y="9" width="22" height="12" rx="1" fill="#ccc" stroke="#555"/><path d="M3 12h18M3 15h18M7 18h10" stroke="#444" stroke-dasharray="2 1"/><path d="M8 8c0-5 8 0 9-6" fill="none" stroke="#444" stroke-width="1.500"/>', tc: '<circle cx="12" cy="12" r="11" fill="#666" stroke="#bbb"/><path d="M17 8c-6-5-12 3-7 8 3 2 6 1 7-1" fill="none" stroke="#fff" stroke-width="3"/>', shield: '<path fill="#4fa52a" stroke="#fff" stroke-width="2" d="M12 1l9 3c1 9-2 15-9 19C5 19 2 13 3 4z"/><path fill="#fff" d="M14 4l-7 9h4l-1 7 7-9h-4z"/>', net: '<rect x="7" y="5" width="15" height="12" fill="#456" stroke="#fff" stroke-width="2"/><path d="M10 21h10M3 2v6h3V2M4.500 8v10" stroke="#fff" fill="none" stroke-width="2"/>', vol: '<path fill="#fff" d="M2 8h4l6-6v20l-6-6H2z"/><path d="M15 8q3 4 0 8M18 5q5 7 0 14" fill="none" stroke="#fff" stroke-width="2"/>', plusc: '<circle cx="12" cy="12" r="11" fill="#f5cc10"/><path d="M1 12a11 11 0 0022 0z" fill="#8c2"/><path d="M12 6v12M6 12h12" stroke="#164010" stroke-width="4"/>',
  gear: '<circle cx="12" cy="12" r="7" fill="none" stroke="#111" stroke-width="2"/><circle cx="12" cy="12" r="1.500" fill="#111"/><path d="M12 1v4M12 19v4M1 12h4M19 12h4M4 4l3 3M17 17l3 3M20 4l-3 3M7 17l-3 3" stroke="#111" stroke-width="2"/>',
  t1: at(0, 0, cube('#fd6', '#fb2', '#d80'), .5) + at(6, 3, cube('#fd6', '#fb2', '#d80'), .45) + P('M5 13v11M5 19h6M14 13h9', 'none', '#12a', 1.5) + at(12, 13, cube('#fd6', '#fb2', '#d80'), .45), t2: P('M3 1l8 5-8 5zM21 1l-8 5 8 5z', '#11c') + '<path d="M12 0v24" stroke="#000" stroke-dasharray="2 1"/>' + P('M2 14h8v9H2z', '#fe3', '#a60') + P('M14 23V13l9 10z', '#c11'), t3: at(1, 0, cyl('#b4a'), .8) + P('M5 13v11M5 19h5M13 11h10', 'none', '#12a', 1.6) + '<circle cx="16" cy="19" r="4.500" fill="none" stroke="#a28" stroke-width="1.500"/><circle cx="16" cy="19" r="1.500" fill="#a28"/>', t4: `<path fill="#3a80d0" d="M3 0h5v12H3z"/>` + P('M8 3h12l-4 3H8M8 8h5M14 12h9', 'none', '#37c', 1.4) + P('M5 13v11M5 19h6', 'none', '#12a', 1.5) + P('M14 16v6h8l-4-3v-3z', 'none', '#37c', 1.4), t5: P('M1 6l15-5v13L1 20zM1 11l15-5M1 15l15-5M6 4v14M11 3v13', '#fff', '#a4a') + P('M3 16L15 4v8L5 20z', '#f92', 'none') + P('M8 13l9-3 6 4v6l-8 3-7-4z', '#f92', '#850') + P('M12 17l10-3v6l-7 3z', '#38e', '#15a'), t6: at(0, 1, P('M2 8h13v12H2zM5 11h6v5H5z', '#ccc', '#444', 1) + P('M16 11l5 2M21 16a4 4 0 11-4 5', 'none', '#666', 2)) + at(13, 0, cube('#fd6', '#f93', '#e51'), .45) + P('M5 6q3-5 8-3', 'none', '#e31', 2), t7: P('M1 7l4-5h4L6 7v15H1z', '#f80', '#830') + P('M7 7l4-5h4l-3 5v15H7z', '#2b3', '#142') + P('M13 7l4-5h6v14l-3 6h-7z', '#39e', '#136'), t8: '<circle cx="9" cy="15" r="8.500" fill="#1a66d8"/><path d="M9 9v2M9 13v7" stroke="#fff" stroke-width="2.500"/><path d="M10 5q9 0 9 10M11 1q12 0 12 13" fill="none" stroke="#37c" stroke-width="2.200"/>', t9: P('M3 1h13l6 6v16H3z', '#fff', '#27c', 1.5) + '<circle cx="12" cy="14" r="6" fill="#38c"/><path d="M8 11l5 1 2 5-4 2z" fill="#3b3"/>', t10: at(0, 0, clk, 1.5), t11: '<path fill="#e22" d="M1 2h10v5H1z"/><path fill="#fe2" d="M1 7h10v5H1z"/><path fill="#2d4" d="M1 12h10v4H1z"/><path fill="#24e" d="M1 16h10v6H1z"/>' + P('M11 8l12 14', 'none', '#111', 2.8), t12: `<path fill="#3a80d0" d="M4 4h6v15H4z"/>` + P('M10 7h12l-5 5h-7', 'none', '#37c', 1.6) + P('M12 8l11 14', 'none', '#111', 2.8) + at(1, 15, star, .6), t13: P('M10 7c3-6 8-4 12-5l-3 4c-5-1-7 1-7 4M11 8l4 9', 'none', '#555', 2.200) + P('M2 15l7 2 6-1 5 5H10z', '#888', '#444') + P('M2 22l5-4 4 4z', '#f93', 'none'), t14: P('M1 3l7 2v17l-7-2z', '#eee', '#333') + P('M9 2h14v13H9z', '#fff', '#c22', 1.5) + P('M11 5h10v8H11z', '#36c') + P('M14 5v5l3-2 3 3V5', '#f75', 'none'),
};
const svg = (n, c) => `<svg class="${c}" viewBox="0 0 24 24" fill="none" aria-hidden="true">${(I[n] || '').replace(/<text /g, '<text fill="#222" ')}</svg>`;

document.querySelectorAll('[data-icon]').forEach(e => { e.innerHTML = svg(e.dataset.icon, 'size-full'); });

// Tool bar notation: g grip, | separator, v drop-down arrow, V overflow arrow, ~ disabled.
const arrow = '<svg class="h-1 w-[7px]" viewBox="0 0 7 4"><path d="M0 0h7L3.500 4z"/></svg>';
const row = (list, slot, size) => list.split(' ').map(t => {
  if (t === 'g') return '<span class="mr-[2px] ml-[3px] h-6 w-[2px] bg-[repeating-linear-gradient(180deg,#999_0_2px,#f4f4f4_2px_4px)]"></span>';
  if (t === '|') return '<span class="mx-[2px] h-[30px] w-[2px] border-r border-white bg-[#b4b4b4]"></span>';
  if (t === 'v') return `<button aria-label="更多选项" class="flex h-6 w-3 items-center justify-center">${arrow}</button>`;
  if (t === 'V') return `<button aria-label="工具条选项" class="flex h-6 w-[14px] items-end justify-center pb-1">${arrow}</button>`;
  const off = t.endsWith('~'), n = t.replace('~', '');
  return `<button aria-label="${n}" class="${slot}${off ? ' opacity-50 saturate-50' : ''}">${svg(n, size)}</button>`;
}).join('');
document.querySelectorAll('[data-bar]').forEach(e => { e.innerHTML = row(e.dataset.bar, 'flex h-8 w-[31px] items-center justify-center', 'size-6'); });
document.querySelectorAll('[data-small]').forEach(e => { e.innerHTML = row(e.dataset.small, 'flex h-6 w-[23px] items-center justify-center', 'size-[17px]'); });

document.querySelectorAll('[data-col]').forEach(e => {
  e.innerHTML = e.dataset.col.split(' ').map(t => {
    if (t === 'g') return '<span class="mt-[3px] mb-[2px] h-[2px] w-6 bg-[repeating-linear-gradient(90deg,#999_0_2px,#f4f4f4_2px_4px)]"></span>';
    if (t === '|') return '<span class="my-[2px] h-[2px] w-10 border-b border-white bg-[#b4b4b4]"></span>';
    if (t === 'V') return '<span class="flex h-3 w-full items-center pl-[7px]"><svg class="size-[6px]" viewBox="0 0 6 6"><path d="M5 0v6L1 3z"/></svg></span>';
    const dd = t.endsWith('v') && t.includes('~'), n = t.split('~')[0], off = t.includes('~');
    return `<button aria-label="${n}" class="flex h-[31px] shrink-0 items-center justify-center gap-[6px]"><span class="${off ? 'opacity-50 saturate-50' : ''}">${svg(n, 'size-6')}</span>${dd ? arrow : ''}</button>`;
  }).join('');
});
document.querySelectorAll('[data-end]').forEach(e => {
  e.innerHTML = '<svg class="size-[6px]" viewBox="0 0 6 6"><path d="M5 0v6L1 3z"/></svg>' + (e.dataset.end === 'both' ? '<svg class="size-2" viewBox="0 0 8 8" fill="none" stroke="#000" stroke-width="1.500"><path d="M1 1l3 2 3-2M1 5l3 2 3-2"/></svg>' : '');
});

document.getElementById('menu').innerHTML = ['文件(F)', '编辑(E)', '视图(V)', '插入(S)', '格式(R)', '工具(T)', '装配(A)', '信息(I)', '分析(L)', '首选项(P)', '窗口(O)', 'GC工具箱', '星空 V6.936F', '帮助(H)']
  .map(m => `<button class="px-[6px] whitespace-nowrap ${m === '首选项(P)' ? 'ml-[9px]' : ''}">${m.replace(/\((.)\)/, '(<u>$1</u>)')}</button>`).join('');

// Tool list
const tools = [['D10', 'MILL', 6], ['D6', 'MILL', 8], ['Z4.0', 'DRILLING_TOOL', 1], ['D8', 'MILL', 7], ['D4', 'MILL', 9], ['D3', 'MILL', 10], ['D2', 'MILL', 11], ['D1', 'MILL', 11], ['WR2', 'MILL_USER_DEFINED', 12], ['WR1.5', 'MILL_USER_DEFINED', 12], ['WR1', 'MILL_USER_DEFINED', 12], ['DJ-D10', 'MILL', 13], ['DJ-D6', 'MILL', 13], ['DJ-D4', 'MILL', 13], ['ZXZ', 'Centerdrill', 11], ['Z2.5', 'Drilling Tool', 4]];
const millI = '<svg class="mr-[3px] h-[14px] w-[10px]" viewBox="0 0 10 14"><path fill="#4a66d0" d="M1 0h5v14H1z"/><path fill="#1a2450" d="M6 0h3v14H6z"/><path stroke="#c0d0ff" stroke-dasharray="1 2" d="M2.500 0v14M4.500 1v13"/></svg>';
const drillI = '<svg class="mr-[3px] h-[14px] w-[10px]" viewBox="0 0 10 14"><path fill="#fff" stroke="#112" d="M1 1h8v9l-3 3H2z"/><path stroke="#112" stroke-width="2" d="M2 9l6-8M3 13l6-8"/></svg>';
const line = (name, d, n, sel) => `<tr class="h-5 border-b border-[#e5e5e5] text-[#222] odd:bg-white even:bg-[#f6f6f6] [&>td]:border-r [&>td]:border-[#e5e5e5] [&>td]:p-0 [&>td]:leading-[19px] ${sel ? '[&>td]:bg-[#39f] [&>td]:text-white' : ''}"><td>${name}</td><td></td><td></td><td><span class="pl-1">${d}</span></td><td><span class="pl-[5px]">${n}</span></td><td></td></tr>`;
document.getElementById('rows').innerHTML =
  line('<span class="pl-[3px]">GENERIC_MACHINE</span>', 'Generic Machine', '') +
  line('<span class="flex h-[19px] items-center pl-1"><svg class="mr-[7px] size-[9px]" viewBox="0 0 9 9" fill="#fff" stroke="#555"><path d="M.5.5h8v8h-8zM2 4.500h5M4.500 2v5"/></svg><svg class="mr-[3px] size-[14px]" viewBox="0 0 14 14"><path fill="#f6dc7a" stroke="#a8842a" d="M.5 1.500h5l1 2h7v10H.5z"/><path fill="none" stroke="#12c" d="M7 6h4v3H8M11 9v3H7"/></svg>未用项</span>', 'mill_planar', '') +
  tools.map((t, i) => {
    const last = i === tools.length - 1;
    return line(`<span class="flex h-[19px] items-center ${last ? 'bg-[#f6f6f6]' : ''}"><i class="ml-[9px] ${last ? 'mb-[9px] h-[10px]' : 'h-5'} border-l border-dotted border-[#999]"></i><i class="mr-1 w-[9px] border-t border-dotted border-[#999]"></i>${t[0][0] === 'Z' ? drillI : millI}<span class="h-full flex-1 pl-[2px] ${last ? 'bg-[#39f]' : ''}">${t[0]}</span></span>`, t[1], t[2], last);
  }).join('') + Array.from({ length: 18 }, () => line('', '', '')).join('');

// Resource bar tabs
document.getElementById('tabs').innerHTML = `<button aria-label="设置" class="mb-5 ml-[7px] pt-[7px]">${svg('gear', 'size-[15px]')}</button>` +
  Array.from({ length: 14 }, (_, i) => `<button aria-label="资源 ${i + 1}" class="flex h-10 items-center rounded-r-md border border-l-0 border-[#666] ${i === 3 ? 'w-7 bg-[#f0f0f0]' : 'w-[26px] bg-linear-to-b from-[#e4e4e4] to-[#ccc]'} ${i > 6 && i < 10 ? 'mt-3' : ''}">${svg('t' + (i + 1), 'size-6')}</button>`).join('');
</script>
</body>
</html>
